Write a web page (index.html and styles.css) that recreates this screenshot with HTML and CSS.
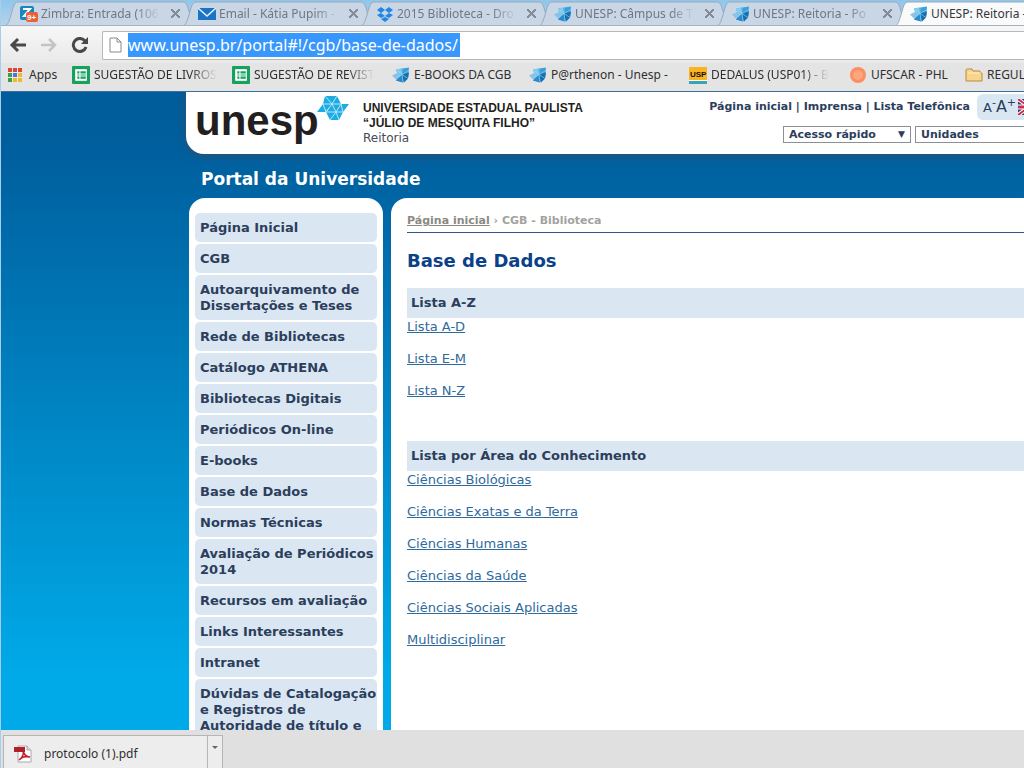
FILE: index.html
```html
<!DOCTYPE html>
<html lang="pt-BR">
<head>
    <meta charset="UTF-8">
    <meta name="viewport" content="width=device-width, initial-scale=1.0">
    <title>UNESP: Reitoria - Portal da Universidade</title>
    <link rel="stylesheet" href="styles.css">
</head>
<body>
<svg class="defs" aria-hidden="true">
    <symbol id="icon-unesp" viewBox="0 0 18 17">
        <path d="M4 3 17 1 16 12 11 16 4 14 6 9Z" fill="#3a9fda"/>
        <path d="M4 3 9 2 10 8 6 9Z" fill="#7fcdf0"/>
        <path d="M0 9 6 6 10 8 4 13Z" fill="#86c3e6"/>
        <path d="M10 8 17 6 16 12 12 16Z" fill="#176fae"/>
        <path d="M4 14 10 8 11 16Z" fill="#2a8acb"/>
        <path d="M10 8 4 3M10 8 10 2M10 8 17 4M10 8 16 12M10 8 11 16M10 8 4 13" stroke="#9ad8f5" stroke-width="0.6" fill="none"/>
    </symbol>
    <symbol id="icon-sheet" viewBox="0 0 17 17">
        <rect width="17" height="17" rx="1" fill="#17a05e"/>
        <path d="M3 3h11v11H3z" fill="#fff"/>
        <path d="M5 5h2v2H5zM8 5h5v2H8zM5 8h2v1H5zM8 8h5v1H8zM5 10h2v2H5zM8 10h5v2H8z" fill="#17a05e"/>
    </symbol>
    <symbol id="tab-shape" viewBox="0 0 190 25" preserveAspectRatio="none">
        <path d="M0 25C3 24 4 20 6 14 8 7 9 1 13 1H178C182 1 183 7 185 14 187 20 188 24 190 25Z"/>
    </symbol>
</svg>

<nav class="tabs" aria-label="Abas">
    <div class="tab">
        <svg class="tab-bg"><use href="#tab-shape"/></svg>
        <svg class="icon" viewBox="0 0 18 18">
            <rect width="14" height="14" x="0" y="1" rx="2" fill="#1588c0"/>
            <path d="M3 4h7L4 11h5" stroke="#fff" stroke-width="2" fill="none"/>
            <rect x="6" y="7" width="12" height="10" rx="2" fill="#e9603c"/>
            <text x="7" y="15" class="badge-text">9+</text>
        </svg>
        <span class="tab-title">Zimbra: Entrada (106</span>
        <button class="tab-close" aria-label="Fechar aba"></button>
    </div>
    <div class="tab">
        <svg class="tab-bg"><use href="#tab-shape"/></svg>
        <svg class="icon" viewBox="0 0 18 18">
            <rect x="0" y="3" width="18" height="12" fill="#1a73c4"/>
            <path d="M0 3 9 11 18 3" stroke="#e8f2fb" stroke-width="1.5" fill="none"/>
        </svg>
        <span class="tab-title">Email - Kátia Pupim -</span>
        <button class="tab-close" aria-label="Fechar aba"></button>
    </div>
    <div class="tab">
        <svg class="tab-bg"><use href="#tab-shape"/></svg>
        <svg class="icon" viewBox="0 0 18 18">
            <path d="M5 2 9 5 5 8 1 5ZM13 2 17 5 13 8 9 5ZM5 8 9 11 5 13 1 10ZM13 8 17 10 13 13 9 11ZM9 12 13 14 9 17 5 14Z" fill="#1f87e5"/>
        </svg>
        <span class="tab-title">2015 Biblioteca - Dro</span>
        <button class="tab-close" aria-label="Fechar aba"></button>
    </div>
    <div class="tab">
        <svg class="tab-bg"><use href="#tab-shape"/></svg>
        <svg class="icon"><use href="#icon-unesp"/></svg>
        <span class="tab-title">UNESP: Câmpus de T</span>
        <button class="tab-close" aria-label="Fechar aba"></button>
    </div>
    <div class="tab">
        <svg class="tab-bg"><use href="#tab-shape"/></svg>
        <svg class="icon"><use href="#icon-unesp"/></svg>
        <span class="tab-title">UNESP: Reitoria - Po</span>
        <button class="tab-close" aria-label="Fechar aba"></button>
    </div>
    <div class="tab active">
        <svg class="tab-bg"><use href="#tab-shape"/></svg>
        <svg class="icon"><use href="#icon-unesp"/></svg>
        <span class="tab-title">UNESP: Reitoria -</span>
    </div>
</nav>

<div class="toolbar">
    <button class="nav-btn" aria-label="Voltar">
        <svg viewBox="0 0 18 16"><path d="M9 2 3 8 9 14M3 8H17" stroke="#484848" stroke-width="3" fill="none"/></svg>
    </button>
    <button class="nav-btn" aria-label="Avançar">
        <svg viewBox="0 0 18 16"><path d="M9 2 15 8 9 14M15 8H1" stroke="#c4c4c4" stroke-width="2.5" fill="none"/></svg>
    </button>
    <button class="nav-btn" aria-label="Recarregar">
        <svg viewBox="0 0 18 16"><path d="M14 4A6.500 6.500 0 1 0 15 10" stroke="#484848" stroke-width="3" fill="none"/><path d="M17 0V7H10Z" fill="#484848"/></svg>
    </button>
    <div class="address">
        <svg class="page-icon" viewBox="0 0 13 16"><path d="M1 1H8L12 5V15H1ZM8 1V5H12" stroke="#8a8a8a" fill="#fff"/></svg>
        <input class="url" type="text" aria-label="Endereço" value="www.unesp.br/portal#!/cgb/base-de-dados/">
    </div>
</div>

<nav class="bookmarks" aria-label="Favoritos">
    <a class="bookmark apps" href="#">
        <svg class="icon" viewBox="0 0 18 18">
            <path d="M1 2h4v4H1zM6 2h4v4H6zM11 2h4v4h-4z" fill="#dc4538"/>
            <path d="M1 7h4v4H1z" fill="#3c9c52"/><path d="M6 7h4v4H6z" fill="#3f7de0"/><path d="M11 7h4v4h-4z" fill="#f0b92c"/>
            <path d="M1 12h4v4H1z" fill="#3c9c52"/><path d="M6 12h9v4H6z" fill="#f0b92c"/>
            <path d="M5.500 1V17M10.500 1V17M0 6.500H16M0 11.500H16" stroke="#e9e9e9"/>
        </svg>
        <span>Apps</span>
    </a>
    <a class="bookmark" href="#"><svg class="icon"><use href="#icon-sheet"/></svg><span class="fade">SUGESTÃO DE LIVROS</span></a>
    <a class="bookmark" href="#"><svg class="icon"><use href="#icon-sheet"/></svg><span class="fade">SUGESTÃO DE REVIST</span></a>
    <a class="bookmark short" href="#"><svg class="icon"><use href="#icon-unesp"/></svg><span>E-BOOKS DA CGB</span></a>
    <a class="bookmark" href="#"><svg class="icon"><use href="#icon-unesp"/></svg><span>P@rthenon - Unesp -</span></a>
    <a class="bookmark" href="#">
        <svg class="icon" viewBox="0 0 18 18">
            <rect width="18" height="13" y="1" fill="#fbb320"/>
            <rect width="18" height="1" y="14" fill="#fff"/>
            <rect width="18" height="3" y="15" fill="#35a6b4"/>
            <text x="1" y="11" class="usp-text">USP</text>
        </svg>
        <span class="fade">DEDALUS (USP01) - B</span>
    </a>
    <a class="bookmark ufscar" href="#">
        <svg class="icon" viewBox="0 0 18 18"><circle cx="9" cy="9" r="8" fill="#fb8f62"/><circle cx="9" cy="9" r="5" fill="#fda57c"/></svg>
        <span>UFSCAR - PHL</span>
    </a>
    <a class="bookmark last" href="#">
        <svg class="icon" viewBox="0 0 18 18"><path d="M1 4 2 3H7L8 5H15V7H17V15H1Z" fill="#f8d58c" stroke="#b98a3c"/><path d="M3 7H16" stroke="#fff0c4"/></svg>
        <span>REGUL</span>
    </a>
</nav>

<div class="viewport">
    <div class="page">
        <header class="header">
            <a class="logo" href="#">unesp<svg class="logo-mark" viewBox="0 0 32 26">
                <path d="M8 1H20L24 9H32L26 17 22 25H13L9 17H0L6 9Z" fill="#1cabe2"/>
                <path d="M8 1 15 9 20 1M6 9H24M15 9 9 17H26M6 9 9 17M15 9 19 17 24 9 26 17M19 17 13 25M19 17 22 25M12 13 9 17" stroke="#b9e8f8" stroke-width="1" fill="none"/>
            </svg></a>
            <div class="institution">
                <strong>UNIVERSIDADE ESTADUAL PAULISTA</strong>
                <strong>“JÚLIO DE MESQUITA FILHO”</strong>
                <span>Reitoria</span>
            </div>
            <div class="tools">
                <div class="tools-row">
                    <nav class="top-links"><a href="#">Página inicial</a> | <a href="#">Imprensa</a> | <a href="#">Lista Telefônica</a></nav>
                    <div class="access">
                        <button class="font-btn" aria-label="Diminuir fonte"><span class="small-a">A</span><sup>-</sup></button>
                        <button class="font-btn" aria-label="Aumentar fonte">A<sup>+</sup></button>
                        <svg class="flag" viewBox="0 0 22 16">
                            <rect width="22" height="16" fill="#2b3f86"/>
                            <path d="M0 0 22 16M22 0 0 16" stroke="#fff" stroke-width="4"/>
                            <path d="M0 0 22 16M22 0 0 16" stroke="#d02c48" stroke-width="2"/>
                            <path d="M11 0V16M0 8H22" stroke="#fff" stroke-width="5"/>
                            <path d="M11 0V16M0 8H22" stroke="#d02c48" stroke-width="3"/>
                        </svg>
                    </div>
                </div>
                <div class="tools-row selects">
                    <div class="select-box"><select aria-label="Acesso rápido"><option>Acesso rápido</option></select></div>
                    <div class="select-box"><select aria-label="Unidades"><option>Unidades</option></select></div>
                </div>
            </div>
        </header>

        <h2 class="portal-title">Portal da Universidade</h2>

        <div class="columns">
            <nav class="sidebar" aria-label="Menu">
                <a href="#">Página Inicial</a>
                <a href="#">CGB</a>
                <a href="#">Autoarquivamento de Dissertações e Teses</a>
                <a href="#">Rede de Bibliotecas</a>
                <a href="#">Catálogo ATHENA</a>
                <a href="#">Bibliotecas Digitais</a>
                <a href="#">Periódicos On-line</a>
                <a href="#">E-books</a>
                <a href="#">Base de Dados</a>
                <a href="#">Normas Técnicas</a>
                <a href="#">Avaliação de Periódicos 2014</a>
                <a href="#">Recursos em avaliação</a>
                <a href="#">Links Interessantes</a>
                <a href="#">Intranet</a>
                <a href="#">Dúvidas de Catalogação e Registros de Autoridade de título e</a>
            </nav>

            <main class="content">
                <div class="breadcrumb"><a href="#">Página inicial</a> › CGB - Biblioteca</div>
                <h1>Base de Dados</h1>

                <section class="list">
                    <h3>Lista A-Z</h3>
                    <ul>
                        <li><a href="#">Lista A-D</a></li>
                        <li><a href="#">Lista E-M</a></li>
                        <li><a href="#">Lista N-Z</a></li>
                    </ul>
                </section>

                <section class="list">
                    <h3>Lista por Área do Conhecimento</h3>
                    <ul>
                        <li><a href="#">Ciências Biológicas</a></li>
                        <li><a href="#">Ciências Exatas e da Terra</a></li>
                        <li><a href="#">Ciências Humanas</a></li>
                        <li><a href="#">Ciências da Saúde</a></li>
                        <li><a href="#">Ciências Sociais Aplicadas</a></li>
                        <li><a href="#">Multidisciplinar</a></li>
                    </ul>
                </section>
            </main>
        </div>
    </div>
</div>

<footer class="downloads">
    <div class="download">
        <button class="download-file">
            <svg class="icon" viewBox="0 0 18 18">
                <path d="M4 1H13L17 5V17H4Z" fill="#fff" stroke="#a8a8a8"/>
                <path d="M13 1V5H17" fill="#ddd" stroke="#a8a8a8"/>
                <rect x="0" y="2" width="11" height="5" fill="#b3202c"/>
                <path d="M5 15C8 13 10 9 9 5C10 10 12 12 16 12C12 11 8 12 5 15Z" fill="none" stroke="#c0202c" stroke-width="1.5"/>
            </svg>
            <span>protocolo (1).pdf</span>
        </button>
        <button class="download-menu" aria-label="Opções"></button>
    </div>
</footer>
</body>
</html>
```
FILE: styles.css
```css
* {
    box-sizing: border-box;
}

body {
    margin: 0;
    height: 100vh;
    display: flex;
    flex-direction: column;
    overflow: hidden;
    border-left: 1px solid #a9cdec;
    font-family: "DejaVu Sans", Verdana, sans-serif;
    font-size: 13px;
    line-height: 16px;
    color: #2c3e5c;
}

button {
    padding: 0;
    border: none;
    background: none;
    font: inherit;
    color: inherit;
}

.defs {
    display: none;
}

.icon {
    width: 18px;
    height: 18px;
    flex: none;
}

/* browser tabs */
.tabs {
    display: flex;
    flex: none;
    height: 26px;
    padding: 1px 0 0 4px;
    overflow: hidden;
    background: linear-gradient(#8fc6ea, #b4d3ec);
    border-bottom: 1px solid #a4b3c2;
    font-family: "Noto Sans", "Open Sans", sans-serif;
    font-size: 12px;
    color: #707780;
}

.tab {
    position: relative;
    flex: none;
    display: flex;
    align-items: center;
    width: 190px;
    height: 25px;
    margin-right: -12px;
    padding: 0 12px 0 15px;
}

.tab-bg {
    position: absolute;
    inset: 0;
    width: 190px;
    height: 25px;
    fill: #c9d6e5;
    stroke: #98aabd;
    stroke-width: 1;
}

.tab .icon,
.tab-title,
.tab-close {
    position: relative;
}

.tab-title {
    width: 124px;
    margin-left: 3px;
    white-space: nowrap;
    mask-image: linear-gradient(to right, #000 78%, transparent 98%);
}

.tab-close {
    width: 16px;
    height: 16px;
    margin-left: 4px;
    background:
        linear-gradient(45deg, transparent 44%, #858c95 44%, #858c95 56%, transparent 56%) center / 9px 9px no-repeat,
        linear-gradient(-45deg, transparent 44%, #858c95 44%, #858c95 56%, transparent 56%) center / 9px 9px no-repeat;
}

.tab.active {
    color: #33363a;
}

.tab.active .tab-title {
    mask-image: none;
}

.tab.active .tab-bg {
    fill: #fafafa;
}

.badge-text {
    font: bold 8px "Liberation Sans", sans-serif;
    fill: #fff;
}

.usp-text {
    font: bold 8px "Liberation Sans", sans-serif;
    fill: #111;
}

/* toolbar */
.toolbar {
    display: flex;
    flex: none;
    align-items: center;
    height: 37px;
    padding: 1px 0 0 8px;
    overflow: hidden;
    background: linear-gradient(#f7f7f7, #e9e9e9);
}

.nav-btn {
    width: 20px;
    height: 18px;
    margin-right: 11px;
}

.nav-btn svg {
    display: block;
    width: 18px;
    height: 16px;
}

.address {
    display: flex;
    flex: 1;
    align-items: center;
    height: 29px;
    padding-left: 6px;
    background: #fff;
    border: 1px solid #b8b8b8;
    border-right: none;
    border-radius: 2px 0 0 2px;
}

.page-icon {
    width: 13px;
    height: 16px;
    margin-right: 6px;
}

.url {
    field-sizing: content;
    height: 24px;
    padding: 0 2px 0 0;
    border: none;
    background: #3797fd;
    color: #fff;
    font-family: "Noto Sans", "Open Sans", sans-serif;
    font-size: 16px;
}

/* bookmarks bar */
.bookmarks {
    display: flex;
    flex: none;
    align-items: center;
    gap: 12px;
    height: 29px;
    padding: 0 0 4px 6px;
    overflow: hidden;
    background: #e4e4e4;
    border-bottom: 1px solid #3d6f9c;
    font-family: "Noto Sans", "Open Sans", sans-serif;
    font-size: 12px;
    white-space: nowrap;
}

.bookmark {
    display: flex;
    flex: none;
    align-items: center;
    gap: 4px;
    width: 148px;
    color: #2f2f2f;
    text-decoration: none;
}

.bookmark.apps {
    width: 53px;
}

.bookmark.short {
    width: 125px;
}

.bookmark.ufscar {
    width: 104px;
}

.bookmark.last {
    width: auto;
}

.fade {
    mask-image: linear-gradient(to right, #000 78%, transparent 100%);
}

/* portal page */
.viewport {
    flex: 1;
    min-height: 0;
    overflow: hidden;
    padding-left: 185px;
    background: linear-gradient(#005c9b, #005f9e 60px, #00a9e7 580px);
}

.page {
    min-width: 875px;
}

.header {
    display: flex;
    height: 62px;
    padding: 0 18px 0 9px;
    background: #fff;
    border-radius: 0 0 0 18px;
    box-shadow: 0 2px 8px #2b4f73;
}

.logo {
    display: flex;
    width: 168px;
    font-family: "Liberation Sans", Arial, sans-serif;
    font-size: 42px;
    font-weight: bold;
    line-height: 58px;
    color: #231f20;
    text-decoration: none;
}

.logo-mark {
    width: 32px;
    height: 26px;
    margin: 3px 0 0 -2px;
}

.institution {
    display: flex;
    flex-direction: column;
    padding-top: 9px;
    font-size: 12px;
    line-height: 15px;
    white-space: nowrap;
    color: #454a58;
}

.institution strong {
    font-family: "Liberation Sans", Arial, sans-serif;
    font-size: 12px;
    color: #231f20;
}

.tools {
    display: flex;
    flex-direction: column;
    align-items: flex-end;
    gap: 6px;
    margin-left: auto;
    padding-top: 2px;
    font-size: 11px;
    font-weight: bold;
    white-space: nowrap;
}

.tools-row {
    display: flex;
    align-items: center;
    gap: 7px;
}

.selects {
    gap: 4px;
}

.top-links a {
    color: inherit;
    text-decoration: none;
}

.access {
    display: flex;
    align-items: center;
    width: 66px;
    height: 26px;
    padding-left: 6px;
    background: #d9e7f3;
    border-radius: 6px;
}

.font-btn {
    font-size: 16px;
    font-weight: normal;
}

.font-btn sup {
    font-size: 11px;
    line-height: 0;
}

.small-a {
    font-size: 13px;
}

.flag {
    flex: none;
    width: 22px;
    height: 16px;
    margin-left: 2px;
}

.select-box {
    position: relative;
}

.select-box::after {
    content: "▼";
    position: absolute;
    right: 6px;
    top: 0;
    font-size: 9px;
    pointer-events: none;
}

select {
    display: block;
    appearance: none;
    width: 128px;
    height: 17px;
    padding: 0 5px;
    border: 1px solid #8a8f98;
    border-radius: 0;
    background: #fff;
    color: inherit;
    font: inherit;
}

.portal-title {
    margin: 0;
    padding: 13px 0 7px 15px;
    font-size: 17px;
    line-height: 24px;
    color: #fff;
}

.columns {
    display: flex;
    gap: 8px;
    padding-left: 3px;
}

.sidebar {
    display: flex;
    flex: none;
    flex-direction: column;
    gap: 2px;
    width: 194px;
    padding: 15px 6px;
    background: #fff;
    border-radius: 16px;
}

.sidebar a {
    padding: 7px 0 6px 5px;
    background: #dae7f2;
    border-radius: 5px;
    color: #2c3e5c;
    font-weight: bold;
    text-decoration: none;
}

.content {
    flex: 1;
    padding: 15px 16px;
    background: #fff;
    border-radius: 16px;
}

.breadcrumb {
    padding-bottom: 3px;
    border-bottom: 1px solid #35558f;
    font-size: 11px;
    font-weight: bold;
    color: #a2a29e;
}

.breadcrumb a {
    color: #8a8a82;
}

h1 {
    margin: 16px 0 15px;
    font-size: 18px;
    line-height: 24px;
    color: #0a4188;
}

.list {
    margin-bottom: 42px;
}

.list h3 {
    margin: 0;
    padding: 7px 4px;
    background: #dae7f2;
    font-size: 13px;
    color: #2c3e5c;
}

.list ul {
    display: flex;
    flex-direction: column;
    gap: 16px;
    margin: 0;
    padding: 1px 0 0;
    list-style: none;
}

.list a {
    color: #2e6a9c;
}

/* download shelf */
.downloads {
    flex: none;
    height: 38px;
    padding: 5px 0 0 2px;
    overflow: hidden;
    background: #e0e0e0;
    font-family: "Noto Sans", "Open Sans", sans-serif;
    font-size: 12px;
    color: #2f2f2f;
}

.download {
    display: flex;
    width: 220px;
    height: 34px;
    background: #ededed;
    border: 1px solid #b5b5b5;
}

.download-file {
    display: flex;
    flex: 1;
    align-items: center;
    gap: 12px;
    padding: 4px 0 0 10px;
}

.download-menu {
    width: 15px;
    border-left: 1px solid #b5b5b5;
}

.download-menu::before {
    content: "";
    display: block;
    width: 0;
    margin: 0 auto 6px;
    border: 3px solid transparent;
    border-top-color: #666;
}
```
